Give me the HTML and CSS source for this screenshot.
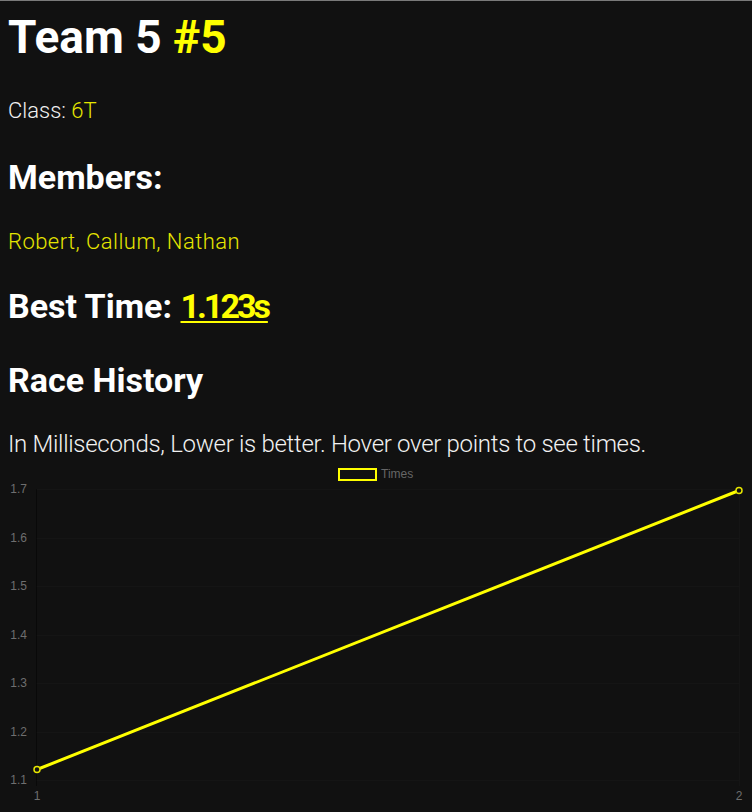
FILE: index.html
```html
<!DOCTYPE html>
<html lang="en">
<head>
<meta charset="utf-8">
<title>Team 5</title>
<link rel="stylesheet" href="styles.css">
</head>
<body>
<h1 class="title">Team 5 <span class="hl">#5</span></h1>
<p class="info">Class: <span class="hl-soft">6T</span></p>
<h2 class="sub">Members:</h2>
<p class="info hl-soft names">Robert, Callum, Nathan</p>
<h2 class="sub best">Best Time: <span class="hl under time">1.123s</span></h2>
<h2 class="sub race">Race History</h2>
<p class="note">In Milliseconds, Lower is better. Hover over points to see times.</p>
<div class="chart">
<svg width="736" height="352" viewBox="0 0 736 352" xmlns="http://www.w3.org/2000/svg">
  <g stroke="rgba(255,255,255,0.02)" stroke-width="1">
    <line x1="28" y1="29.5" x2="731" y2="29.5"/>
    <line x1="28" y1="78.5" x2="731" y2="78.5"/>
    <line x1="28" y1="126.5" x2="731" y2="126.5"/>
    <line x1="28" y1="175.5" x2="731" y2="175.5"/>
    <line x1="28" y1="223.5" x2="731" y2="223.5"/>
    <line x1="28" y1="272.5" x2="731" y2="272.5"/>
    <line x1="28" y1="320.5" x2="731" y2="320.5"/>
    <line x1="731.5" y1="29" x2="731.5" y2="326"/>
  </g>
  <line x1="28.5" y1="29" x2="28.5" y2="326" stroke="rgba(0,0,0,0.45)" stroke-width="1"/>
  <rect x="331" y="9" width="37" height="11" fill="#111" stroke="#ffff00" stroke-width="2"/>
  <text x="373" y="18" class="legend">Times</text>
  <g class="ylab">
    <text x="19" y="33">1.7</text>
    <text x="19" y="81.5">1.6</text>
    <text x="19" y="130">1.5</text>
    <text x="19" y="178.5">1.4</text>
    <text x="19" y="227">1.3</text>
    <text x="19" y="275.5">1.2</text>
    <text x="19" y="324">1.1</text>
  </g>
  <g class="xlab">
    <text x="29" y="340">1</text>
    <text x="731" y="340">2</text>
  </g>
  <line x1="29" y1="309.5" x2="731" y2="30.5" stroke="#ffff00" stroke-width="3"/>
  <circle cx="29" cy="309.5" r="3" fill="#111" stroke="#e6e600" stroke-width="1.5"/>
  <circle cx="731" cy="30.5" r="3" fill="#111" stroke="#e6e600" stroke-width="1.5"/>
</svg>
</div>
</body>
</html>
```
FILE: styles.css
```css
html {
  background: #111111;
}
body {
  margin: 0;
  border-top: 1px solid #7a7a7a;
  padding: 0 8px;
  background: #111111;
  color: #f2f2f2;
  font-family: Roboto, "Liberation Sans", sans-serif;
  font-weight: 300;
  overflow: hidden;
  height: 811px;
}
.title {
  margin: 8px 0 0;
  font-size: 46px;
  line-height: 56px;
  font-weight: 700;
  color: #ffffff;
}
.hl {
  color: #ffff00;
}
.hl-soft {
  color: #e6e600;
}
.under {
  text-decoration: underline;
  text-decoration-thickness: 2px;
  text-underline-offset: 3px;
}
.time {
  letter-spacing: -3px;
}
.info {
  margin: 32px 0 0;
  font-size: 22px;
  line-height: 28px;
}
.names {
  letter-spacing: 0.45px;
}
.sub {
  margin: 32px 0 0;
  font-size: 34px;
  line-height: 40px;
  font-weight: 700;
  color: #ffffff;
}
.sub + .info {
  margin-top: 31px;
}
.best {
  margin-top: 30px;
}
.race {
  margin-top: 34px;
}
.note {
  margin: 29px 0 0;
  font-size: 24px;
  line-height: 30px;
  letter-spacing: -0.3px;
  color: #f2f2f2;
}
.chart {
  margin-top: 1px;
}
.chart svg {
  display: block;
}
.legend {
  font-family: "Liberation Sans", Arial, sans-serif;
  font-size: 12px;
  fill: #666666;
}
.ylab text {
  font-family: "Liberation Sans", Arial, sans-serif;
  font-size: 12px;
  fill: #6e6e6e;
  text-anchor: end;
}
.xlab text {
  font-family: "Liberation Sans", Arial, sans-serif;
  font-size: 12px;
  fill: #6e6e6e;
  text-anchor: middle;
}
```
